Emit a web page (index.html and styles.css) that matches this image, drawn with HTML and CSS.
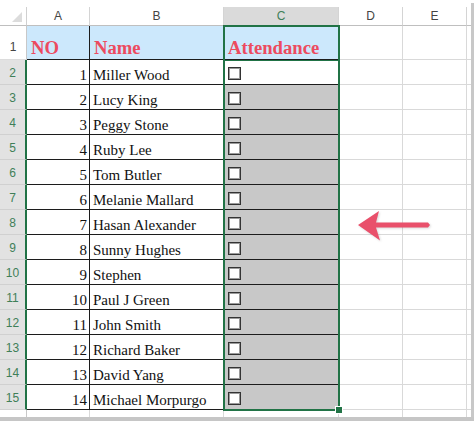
FILE: index.html
```html
<!DOCTYPE html>
<html>
<head>
<meta charset="utf-8">
<link rel="stylesheet" href="styles.css">
</head>
<body>
<div class="window">
  <div class="viewport">
    <div class="sheet">
      <div class="grid">
        <div class="corner"><span class="tri"></span></div>
        <div class="ch">A</div><div class="ch">B</div><div class="ch chs">C</div><div class="ch">D</div><div class="ch">E</div><div class="ch last"></div>

        <div class="rh r1">1</div>
        <div class="c d hd r1c">NO</div><div class="c d hd r1c">Name</div><div class="c d hd r1c">Attendance</div><div class="c r1c"></div><div class="c r1c"></div><div class="c last r1c"></div>

        <div class="rh sel">2</div><div class="c d num">1</div><div class="c d nm">Miller Wood</div><div class="c d box"><span class="chk"></span></div><div class="c"></div><div class="c"></div><div class="c last"></div>
        <div class="rh sel">3</div><div class="c d num">2</div><div class="c d nm">Lucy King</div><div class="c d box gr"><span class="chk"></span></div><div class="c"></div><div class="c"></div><div class="c last"></div>
        <div class="rh sel">4</div><div class="c d num">3</div><div class="c d nm">Peggy Stone</div><div class="c d box gr"><span class="chk"></span></div><div class="c"></div><div class="c"></div><div class="c last"></div>
        <div class="rh sel">5</div><div class="c d num">4</div><div class="c d nm">Ruby Lee</div><div class="c d box gr"><span class="chk"></span></div><div class="c"></div><div class="c"></div><div class="c last"></div>
        <div class="rh sel">6</div><div class="c d num">5</div><div class="c d nm">Tom Butler</div><div class="c d box gr"><span class="chk"></span></div><div class="c"></div><div class="c"></div><div class="c last"></div>
        <div class="rh sel">7</div><div class="c d num">6</div><div class="c d nm">Melanie Mallard</div><div class="c d box gr"><span class="chk"></span></div><div class="c"></div><div class="c"></div><div class="c last"></div>
        <div class="rh sel">8</div><div class="c d num">7</div><div class="c d nm">Hasan Alexander</div><div class="c d box gr"><span class="chk"></span></div><div class="c"></div><div class="c"></div><div class="c last"></div>
        <div class="rh sel">9</div><div class="c d num">8</div><div class="c d nm">Sunny Hughes</div><div class="c d box gr"><span class="chk"></span></div><div class="c"></div><div class="c"></div><div class="c last"></div>
        <div class="rh sel">10</div><div class="c d num">9</div><div class="c d nm">Stephen</div><div class="c d box gr"><span class="chk"></span></div><div class="c"></div><div class="c"></div><div class="c last"></div>
        <div class="rh sel">11</div><div class="c d num">10</div><div class="c d nm">Paul J Green</div><div class="c d box gr"><span class="chk"></span></div><div class="c"></div><div class="c"></div><div class="c last"></div>
        <div class="rh sel">12</div><div class="c d num">11</div><div class="c d nm">John Smith</div><div class="c d box gr"><span class="chk"></span></div><div class="c"></div><div class="c"></div><div class="c last"></div>
        <div class="rh sel">13</div><div class="c d num">12</div><div class="c d nm">Richard Baker</div><div class="c d box gr"><span class="chk"></span></div><div class="c"></div><div class="c"></div><div class="c last"></div>
        <div class="rh sel">14</div><div class="c d num">13</div><div class="c d nm">David Yang</div><div class="c d box gr"><span class="chk"></span></div><div class="c"></div><div class="c"></div><div class="c last"></div>
        <div class="rh sel">15</div><div class="c d num">14</div><div class="c d nm">Michael Morpurgo</div><div class="c d box gr"><span class="chk"></span></div><div class="c"></div><div class="c"></div><div class="c last"></div>

        <div class="rh">16</div><div class="c"></div><div class="c"></div><div class="c"></div><div class="c"></div><div class="c"></div><div class="c last"></div>
      </div>
      <div class="selection"><span class="subline"></span></div>
      <span class="handle"></span>
      <svg class="arrow" width="80" height="40" viewBox="352 206 80 40">
        <polygon points="358,225 379,211 376,222.5 428,222.5 430,225 428,227.5 376,227.5 380,240.5" fill="#e9506b"/>
      </svg>
    </div>
    <div class="vscroll"></div>
  </div>
  <div class="hscroll"></div>
</div>
</body>
</html>
```
FILE: styles.css
```css
* { box-sizing: border-box; }
html, body { margin: 0; padding: 0; background: #fff; }
body { width: 474px; height: 421px; overflow: hidden; }

.window { display: flex; flex-direction: column; width: 474px; height: 421px; }
.viewport { display: flex; height: 417px; overflow: hidden; }
.sheet { position: relative; width: 471px; padding-top: 7px; }
.vscroll { width: 3px; margin-top: 3px; background: #c8c8c8; }
.hscroll { height: 4px; background: #c6c6c6; }

.grid {
  display: grid;
  grid-template-columns: 27px 63px 134px 115px 64px 64px 4px;
  grid-template-rows: 19px 34px repeat(14, 25px) 25px;
}

.corner { position: relative; background: #fff; border-right: 1px solid #d0d0d0; border-bottom: 1px solid #bfbfbf; }
.tri {
  position: absolute; left: 12px; top: 5px; width: 0; height: 0;
  border-left: 10px solid transparent; border-bottom: 10px solid #dcdcdc;
}

.ch {
  display: flex; align-items: center; justify-content: center;
  font: 12px "Liberation Sans", Arial, sans-serif; color: #444;
  background: #fff; border-right: 1px solid #d4d4d4; border-bottom: 1px solid #bfbfbf;
}
.ch.chs { background: #dadada; color: #3f7f58; }
.ch.last { border-right: none; }

.rh {
  display: flex; align-items: center; justify-content: center;
  font: 12px "Liberation Sans", Arial, sans-serif; color: #444;
  background: #fff; border-right: 1px solid #c8c8c8; border-bottom: 1px solid #dcdcdc;
  padding-top: 2px;
}
.rh.r1 { align-items: flex-end; padding-bottom: 5px; }
.rh.sel { background: #e2e2e2; color: #3f7f58; border-right: 2px solid #217346; border-bottom-color: #d0d0d0; }

.c { border-right: 1px solid #d9d9d9; border-bottom: 1px solid #d9d9d9; background: #fff; }
.c.last { border-right: none; }
.c.d {
  border-right: 1px solid #1c1c1c; border-bottom: 1px solid #1c1c1c;
  display: flex; align-items: flex-end;
  font: 15px/17px "Liberation Serif", "Times New Roman", serif; color: #111;
}
.c.hd {
  background: #cce8fc;
  font: bold 18.67px/20px "Liberation Serif", "Times New Roman", serif;
  color: #ec4b5f; padding: 0 0 1px 4px;
}
.c.num { justify-content: flex-end; padding-right: 2px; }
.c.nm { padding-left: 3px; white-space: nowrap; }
.c.box { align-items: flex-start; padding: 7px 0 0 4px; }
.c.gr { background: #c8c8c8; }

.chk {
  display: block; width: 13px; height: 13px;
  background: #fff; border: 1px solid #333;
  box-shadow: inset 0 0 0 1px #9a9a9a;
}

.selection {
  position: absolute; left: 223px; top: 25px; width: 117px; height: 386px;
  border: 2px solid #217346;
}
.subline {
  position: absolute; left: 0; right: 0; top: 33px; height: 1px; background: #217346;
}
.handle {
  position: absolute; left: 336px; top: 407px; width: 6px; height: 6px;
  background: #217346; outline: 1px solid #fff;
}
.arrow { position: absolute; left: 352px; top: 206px; filter: drop-shadow(1px 1px 1px rgba(0,0,0,0.15)); }
```
